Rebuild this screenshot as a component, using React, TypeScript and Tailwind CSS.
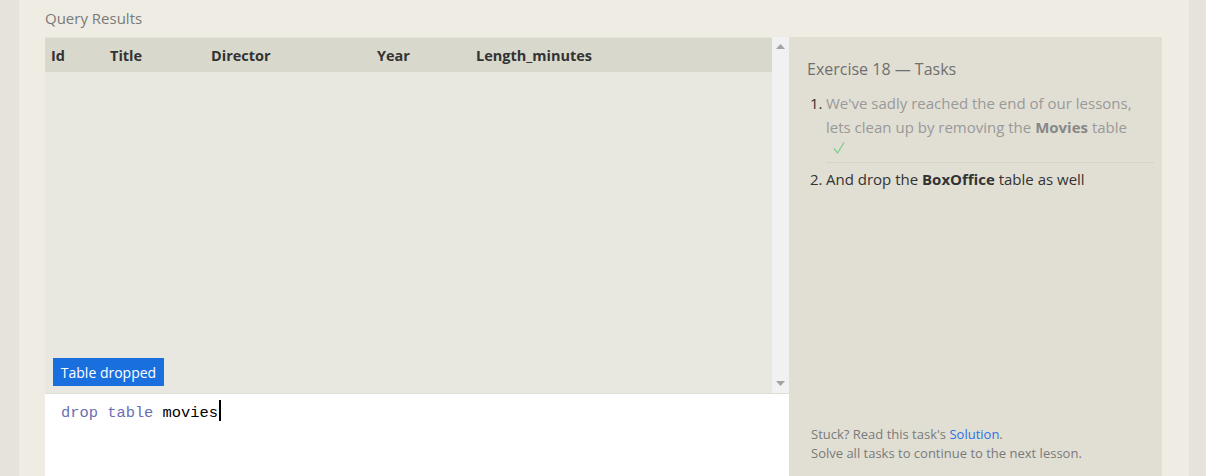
import React from 'react';

const columns = [
  { label: 'Id', width: 'w-[59px]' },
  { label: 'Title', width: 'w-[101px]' },
  { label: 'Director', width: 'w-[166px]' },
  { label: 'Year', width: 'w-[99px]' },
  { label: 'Length_minutes', width: 'w-[160px]' },
];

const App: React.FC = () => {
  return (
    <div className="flex h-[476px] w-[1206px] overflow-hidden bg-[#e6e2dc] font-['Open_Sans',sans-serif]">
      <div className="w-[19px] shrink-0" />

      {/* Main card */}
      <div className="flex flex-1 flex-col bg-[#efece4] pl-[26px] pr-[27px]">
        <div className="h-[37px] pt-[7px] text-[15px] leading-[22px] text-[#7a7a7a]">Query Results</div>

        <div className="flex flex-1">
          {/* Results + editor */}
          <div className="flex w-[744px] flex-col">
            <div className="flex h-[356px]">
              <div className="relative flex-1 bg-[#e9e8e0]">
                <div className="flex h-[35px] items-center border-t border-[#e4e3da] bg-[#d9d8cc] pl-[6px] pt-[2px] text-[14.5px] font-bold text-[#333]">
                  {columns.map((c) => (
                    <div key={c.label} className={c.width}>
                      {c.label}
                    </div>
                  ))}
                </div>
                <div className="absolute left-[8px] top-[321px] flex h-[28px] w-[111px] items-center justify-center bg-[#1a6fdf] text-[14px] text-white">
                  Table dropped
                </div>
              </div>
              {/* Scrollbar */}
              <div className="flex w-[17px] flex-col items-center justify-between bg-[#f1f1f1] py-[7px]">
                <svg width="9" height="5" viewBox="0 0 9 5">
                  <path d="M4.5 0 L9 5 L0 5 Z" fill="#a3a3a3" />
                </svg>
                <svg width="9" height="5" viewBox="0 0 9 5">
                  <path d="M0 0 L9 0 L4.5 5 Z" fill="#a3a3a3" />
                </svg>
              </div>
            </div>

            {/* Editor */}
            <div className="flex-1 border-t border-[#dedcd3] bg-white pl-[16px] pt-[2px] font-['Liberation_Mono',monospace] text-[15.4px] leading-[22px]">
              <span className="text-[#6b6fb5]">drop table </span>
              <span className="text-black">movies</span>
              <span className="ml-[1px] inline-block h-[21px] w-[2px] translate-y-[4px] bg-black" />
            </div>
          </div>

          {/* Tasks panel */}
          <div className="flex flex-1 flex-col bg-[#e1dfd4] pl-[18px] pr-[8px]">
            <div className="pt-[20px] text-[16px] leading-[24px] text-[#6f6f6f]">Exercise 18 — Tasks</div>

            <ol className="mt-[10px] text-[15px] leading-[24px]">
              <li className="flex">
                <span className="w-[19px] pl-[3px] text-[#333]">1.</span>
                <div className="flex-1 border-b border-[#d6d4c9] pb-[6px] text-[#999]">
                  <div className="w-[312px]">
                    We've sadly reached the end of our lessons, lets clean up by removing the{' '}
                    <b className="text-[#888]">Movies</b> table
                  </div>
                  <div className="h-[17px] pl-[7px] pt-[3px]">
                    <svg width="12" height="12" viewBox="0 0 12 12">
                      <path d="M1 6.5 L4.6 11 L11 0.5" fill="none" stroke="#7fcf8f" strokeWidth="1.3" />
                    </svg>
                  </div>
                </div>
              </li>
              <li className="flex pt-[4px]">
                <span className="w-[19px] pl-[3px] text-[#333]">2.</span>
                <div className="flex-1 text-[#333]">
                  And drop the <b>BoxOffice</b> table as well
                </div>
              </li>
            </ol>

            <div className="mt-auto pb-[13px] pl-[4px] text-[13px] leading-[19px] text-[#7a7a7a]">
              <div>
                Stuck? Read this task's <span className="text-[#2f6fe6]">Solution</span>.
              </div>
              <div>Solve all tasks to continue to the next lesson.</div>
            </div>
          </div>
        </div>
      </div>

      <div className="w-[17px] shrink-0" />
    </div>
  );
};

export default App;
